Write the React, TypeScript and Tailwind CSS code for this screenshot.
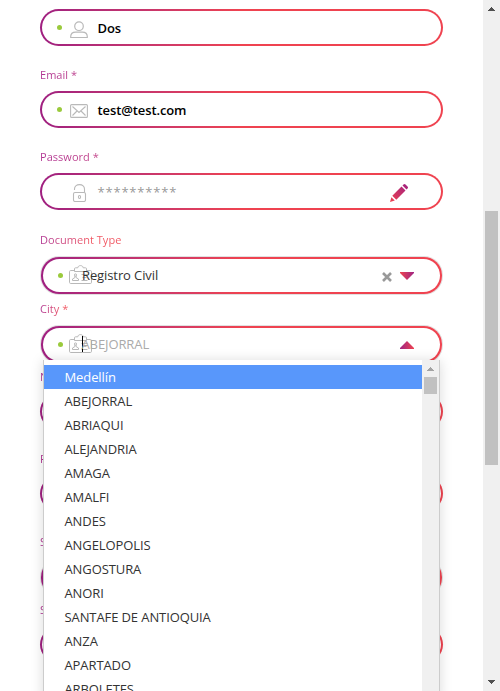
import type { ReactNode } from "react";

type IconName = "user" | "mail" | "lock" | "card";

const cities = [
  "Medellín", "ABEJORRAL", "ABRIAQUI", "ALEJANDRIA", "AMAGA", "AMALFI", "ANDES",
  "ANGELOPOLIS", "ANGOSTURA", "ANORI", "SANTAFE DE ANTIOQUIA", "ANZA", "APARTADO", "ARBOLETES",
];

function FieldIcon({ name }: { name: IconName }) {
  if (name === "user")
    return (
      <svg width="18" height="18" viewBox="0 0 18 18" fill="none" stroke="#b9b9b9" strokeWidth="1.2">
        <circle cx="9" cy="5.2" r="4.3" />
        <path d="M.7 16.500v-.8c0-3 2.100-4.600 5-4.600h6.600c2.900 0 5 1.600 5 4.600v.8z" strokeLinejoin="round" />
      </svg>
    );
  if (name === "mail")
    return (
      <svg width="18" height="14" viewBox="0 0 18 14" fill="none" stroke="#b9b9b9" strokeWidth="1.1">
        <rect x=".6" y=".6" width="16.800" height="12.800" rx="1" />
        <path d="M2.500 2.500 9 8.500l6.500-6M2.500 11.500 7 7M15.500 11.500 11 7" />
      </svg>
    );
  if (name === "lock")
    return (
      <svg width="18" height="18" viewBox="0 0 18 18" fill="none" stroke="#b9b9b9" strokeWidth="1.1">
        <rect x="3.500" y="8.500" width="12" height="9" rx="1.500" />
        <path d="M4.500 6V5c0-2.600 2-4.400 5-4.400s5 1.800 5 4.400v3.500" />
        <ellipse cx="9.500" cy="13" rx="1.100" ry="1.500" />
      </svg>
    );
  return (
    <svg className="shrink-0" width="23" height="19" viewBox="0 0 23 19" fill="none" stroke="#b9b9b9" strokeWidth="1">
      <path d="M5.500 5.500H1.700q-1.200 0-1.200 1.200v10.600q0 1.200 1.200 1.200h19.600q1.200 0 1.200-1.200V6.700q0-1.200-1.200-1.200H17.500" />
      <path d="M5.500 6.500V3.800q0-1 1-1h2.300C9.100 1.200 10 .6 11.500.6s2.400.6 2.700 2.200h2.300q1 0 1 1v2.700z" />
      <circle cx="6.500" cy="10" r="1.100" />
      <path d="M5.900 11v1.600L3.500 14v1.500h6V14l-2.400-1.400V11M12.500 9.500h6M13.500 12.500h4M12.500 15.500h6" />
    </svg>
  );
}

function Field({ icon, dot = true, select = false, children }: { icon?: IconName; dot?: boolean; select?: boolean; children?: ReactNode }) {
  const offset = icon === "user" ? "mt-1" : icon === "mail" || icon === "lock" ? "mt-0.5" : "";
  return (
    <div
      className={`h-[37px] shrink-0 bg-linear-to-r from-[#9f1f80] to-[#ef4350] to-50% p-[2px] ${
        select ? "mx-px rounded-[18px] shadow-[0_0_0_1px_#e1e1e1]" : "rounded-[18.5px]"
      }`}
    >
      <div className="flex h-full items-center rounded-[17px] bg-white">
        <span className={`ml-[15px] size-[5px] shrink-0 rounded-full ${dot ? "bg-[#9aca3c]" : ""}`} />
        <span className={`flex shrink-0 items-center ${select ? "-mt-0.5 ml-[6px] w-[18px]" : `ml-2 w-[27.5px] ${offset}`}`}>
          {icon && <FieldIcon name={icon} />}
        </span>
        {children}
      </div>
    </div>
  );
}

function Label({ children, tone = "wide" }: { children: ReactNode; tone?: "wide" | "doc" | "short" }) {
  const end = tone === "wide" ? "to-[200px]" : tone === "doc" ? "to-[50px]" : "to-[22px]";
  return (
    <div className={`h-4 shrink-0 bg-linear-to-r from-[#a81f88] to-[#ef4350] bg-clip-text text-[11px] font-normal leading-4 tracking-[0.03px] text-transparent opacity-90 ${end}`}>
      {children}
    </div>
  );
}

function Arrow({ up = false }: { up?: boolean }) {
  return (
    <svg width="14" height="8" viewBox="0 0 14 8" className="shrink-0">
      <defs>
        <linearGradient id={up ? "arrow-up" : "arrow-down"}>
          <stop stopColor={up ? "#9f2583" : "#ef4350"} />
          <stop offset="1" stopColor={up ? "#ef4350" : "#9f2583"} />
        </linearGradient>
      </defs>
      <path d={up ? "M0 8V7L7 0l7 7v1z" : "M0 0v1l7 7 7-7V0z"} fill={up ? "url(#arrow-up)" : "url(#arrow-down)"} />
    </svg>
  );
}

function Pencil() {
  return (
    <svg width="18" height="18" viewBox="0 0 18 18">
      <defs>
        <linearGradient id="pencil" x1="0" y1="1" x2="1" y2="0">
          <stop stopColor="#ef4350" />
          <stop offset="1" stopColor="#9f1f80" />
        </linearGradient>
      </defs>
      <path d="m11.500 2.600 4 4-9.200 9.200-4-4zM12.500 1.600l1-1q1-1 2 0l2 2q1 1 0 2l-1 1zM1.400 13.200l3.400 3.400L0 18z" fill="url(#pencil)" />
    </svg>
  );
}

export default function App() {
  return (
    <main className="relative flex h-[691px] w-[500px] overflow-hidden bg-white font-['Open_Sans',sans-serif] text-[13px] leading-5 tracking-[-0.1px] text-[#333]">
      <form className="ml-10 mr-10 flex w-[403px] shrink-0 flex-col pt-[9px]">
        <Field icon="user"><span className="font-semibold text-black">Dos</span></Field>
        <div className="h-[21px] shrink-0" />
        <Label>Email *</Label>
        <div className="h-2 shrink-0" />
        <Field icon="mail"><span className="font-semibold text-black">test@test.com</span></Field>
        <div className="h-[21px] shrink-0" />
        <Label>Password *</Label>
        <div className="h-2 shrink-0" />
        <Field icon="lock" dot={false}>
          <span className="tracking-[0.8px] text-[#999]">**********</span>
          <span className="ml-auto mr-[33px] pt-0.5"><Pencil /></span>
        </Field>
        <div className="h-[22px] shrink-0" />
        <Label tone="doc">Document Type</Label>
        <div className="h-[9px] shrink-0" />
        <Field icon="card" select>
          <span className="z-10 -ml-[5px] -mt-0.5">Registro Civil</span>
          <svg className="ml-auto mr-2 mt-0.5" width="10" height="10" viewBox="0 0 10 10" stroke="#999" strokeWidth="2.600"><path d="m1 1 8 8M9 1 1 9" /></svg>
          <span className="mr-[26px]"><Arrow /></span>
        </Field>
        <div className="h-[7px] shrink-0" />
        <Label tone="short">City *</Label>
        <div className="h-[9px] shrink-0" />
        <Field icon="card" select>
          <span className="z-10 -ml-[5px] -mt-0.5 h-4 border-l border-black leading-4 text-[#aaa]"><span className="-ml-[1.5px]">ABEJORRAL</span></span>
          <span className="ml-auto mr-[26px]"><Arrow up /></span>
        </Field>
        <div className="h-[6px] shrink-0" />
        <Label>N</Label>
        <div className="h-2 shrink-0" />
        <Field dot={false} />
        <div className="h-[21px] shrink-0" />
        <Label>P</Label>
        <div className="h-2 shrink-0" />
        <Field dot={false} />
        <div className="h-[22px] shrink-0" />
        <Label>S</Label>
        <div className="h-[9px] shrink-0" />
        <Field dot={false} select />
        <div className="h-[6px] shrink-0" />
        <Label>S</Label>
        <div className="h-2 shrink-0" />
        <Field dot={false} />
      </form>
      <div className="absolute left-[43px] top-[360px] flex h-[340px] w-[397px] border-x border-[#ccc] bg-white shadow-[0_1px_12px_rgba(0,0,0,0.15)]">
        <ul className="flex-1 pt-[5px]">
          {cities.map((city, i) => (
            <li key={city} className={`h-6 pl-[20.5px] leading-6 ${i === 0 ? "bg-[#5897fb] text-white" : ""}`}>{city}</li>
          ))}
        </ul>
        <div className="flex w-[17px] flex-col items-center bg-[#f0f0f0] pt-[7px]">
          <svg width="7" height="4" viewBox="0 0 7 4" fill="#a3a3a3" shapeRendering="crispEdges"><path d="M3 0h1v1h1v1h1v1h1v1H0V3h1V2h1V1h1z" /></svg>
          <div className="mt-1.5 h-[17px] w-[13px] bg-[#c1c1c1]" />
        </div>
      </div>
      <aside className="flex h-full w-[17px] shrink-0 flex-col items-center bg-[#f0f0f0] py-[7px]">
        <svg width="7" height="4" viewBox="0 0 7 4" fill="#505050" shapeRendering="crispEdges"><path d="M3 0h1v1h1v1h1v1h1v1H0V3h1V2h1V1h1z" /></svg>
        <div className="mt-[200px] h-[254px] w-[13px] bg-[#c1c1c1]" />
        <svg className="mt-auto" width="7" height="4" viewBox="0 0 7 4" fill="#505050" shapeRendering="crispEdges"><path d="M0 0h7v1H6v1H5v1H4v1H3V3H2V2H1V1H0z" /></svg>
      </aside>
    </main>
  );
}
